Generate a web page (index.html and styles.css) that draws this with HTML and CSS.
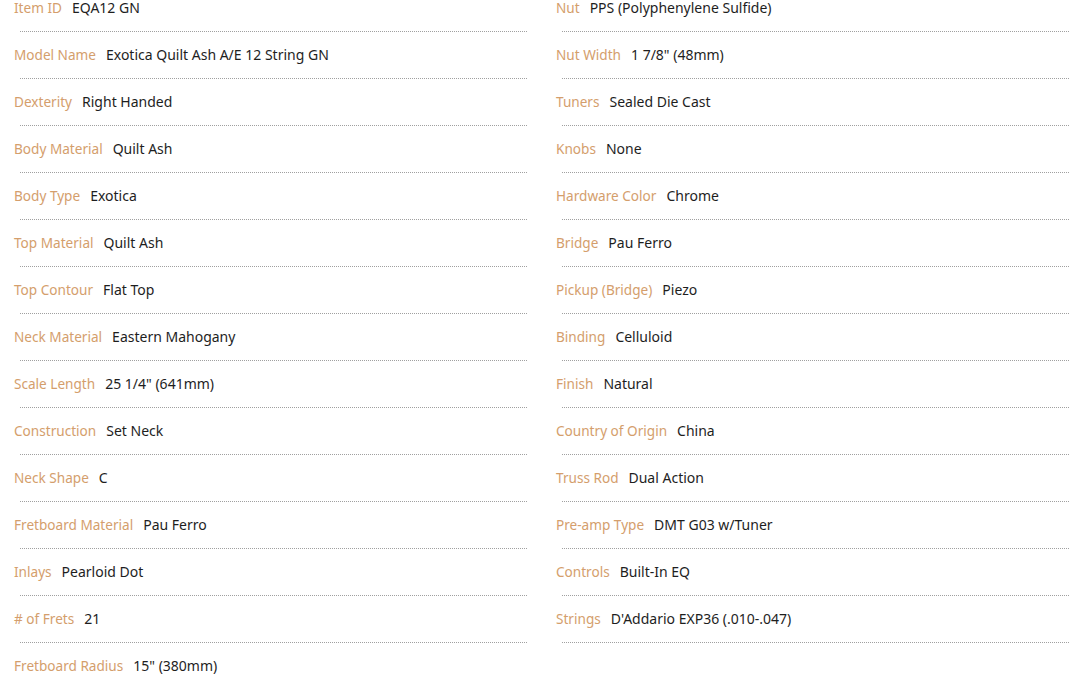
FILE: index.html
```html
<!DOCTYPE html>
<html>
<head>
<meta charset="utf-8">
<link rel="stylesheet" href="styles.css">
</head>
<body>
<div class="specs">
  <div class="col">
    <div class="row"><span class="label">Item ID</span><span class="value">EQA12 GN</span></div>
    <div class="row"><span class="label">Model Name</span><span class="value">Exotica Quilt Ash A/E 12 String GN</span></div>
    <div class="row"><span class="label">Dexterity</span><span class="value">Right Handed</span></div>
    <div class="row"><span class="label">Body Material</span><span class="value">Quilt Ash</span></div>
    <div class="row"><span class="label">Body Type</span><span class="value">Exotica</span></div>
    <div class="row"><span class="label">Top Material</span><span class="value">Quilt Ash</span></div>
    <div class="row"><span class="label">Top Contour</span><span class="value">Flat Top</span></div>
    <div class="row"><span class="label">Neck Material</span><span class="value">Eastern Mahogany</span></div>
    <div class="row"><span class="label">Scale Length</span><span class="value">25 1/4" (641mm)</span></div>
    <div class="row"><span class="label">Construction</span><span class="value">Set Neck</span></div>
    <div class="row"><span class="label">Neck Shape</span><span class="value">C</span></div>
    <div class="row"><span class="label">Fretboard Material</span><span class="value">Pau Ferro</span></div>
    <div class="row"><span class="label">Inlays</span><span class="value">Pearloid Dot</span></div>
    <div class="row"><span class="label"># of Frets</span><span class="value">21</span></div>
    <div class="row"><span class="label">Fretboard Radius</span><span class="value">15" (380mm)</span></div>
  </div>
  <div class="col">
    <div class="row"><span class="label">Nut</span><span class="value">PPS (Polyphenylene Sulfide)</span></div>
    <div class="row"><span class="label">Nut Width</span><span class="value">1 7/8" (48mm)</span></div>
    <div class="row"><span class="label">Tuners</span><span class="value">Sealed Die Cast</span></div>
    <div class="row"><span class="label">Knobs</span><span class="value">None</span></div>
    <div class="row"><span class="label">Hardware Color</span><span class="value">Chrome</span></div>
    <div class="row"><span class="label">Bridge</span><span class="value">Pau Ferro</span></div>
    <div class="row"><span class="label">Pickup (Bridge)</span><span class="value">Piezo</span></div>
    <div class="row"><span class="label">Binding</span><span class="value">Celluloid</span></div>
    <div class="row"><span class="label">Finish</span><span class="value">Natural</span></div>
    <div class="row"><span class="label">Country of Origin</span><span class="value">China</span></div>
    <div class="row"><span class="label">Truss Rod</span><span class="value">Dual Action</span></div>
    <div class="row"><span class="label">Pre-amp Type</span><span class="value">DMT G03 w/Tuner</span></div>
    <div class="row"><span class="label">Controls</span><span class="value">Built-In EQ</span></div>
    <div class="row"><span class="label">Strings</span><span class="value">D'Addario EXP36 (.010-.047)</span></div>
  </div>
</div>
</body>
</html>
```

FILE: styles.css
```css
html, body {
  margin: 0;
  padding: 0;
  background: #fff;
  overflow: hidden;
}
body {
  font-family: "Noto Sans", "Open Sans", sans-serif;
  font-size: 14px;
}
.specs {
  display: grid;
  grid-template-columns: 1fr 1fr;
  column-gap: 29px;
  padding: 0 11px 0 14px;
  margin-top: -2px;
}
.row {
  margin: 0 0 13px 6px;
  padding-bottom: 13px;
  border-bottom: 1px dotted #a0a0a0;
  line-height: 20px;
  height: 20px;
  white-space: nowrap;
}
.label {
  margin-left: -6px;
  color: #d49e6c;
  font-size: 13.6px;
  margin-right: 10px;
}
.value {
  color: #1e1e1e;
}
```
